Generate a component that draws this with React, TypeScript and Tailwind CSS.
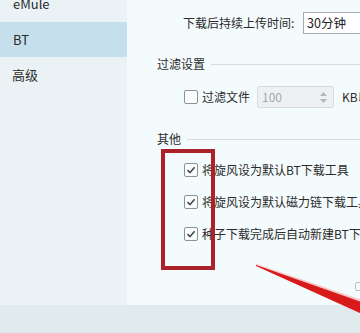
import React from "react";

function CheckBox({ checked }: { checked?: boolean }) {
  return (
    <span className="w-[14px] h-[14px] shrink-0 rounded-[2px] border border-[#8e9396] bg-[#fbfdfd] flex items-center justify-center">
      {checked && (
        <svg width="10" height="10" viewBox="0 0 10 10">
          <polyline points="1.5,5.2 4,7.6 8.6,2.2" fill="none" stroke="#474b4e" strokeWidth="1.6" />
        </svg>
      )}
    </span>
  );
}

function SectionTitle({ label }: { label: string }) {
  return (
    <div className="h-[16px] flex items-center">
      <span className="whitespace-nowrap">{label}</span>
      <div className="flex-1 h-px bg-[#d3dbde] ml-[6px]" />
    </div>
  );
}

export default function App() {
  const options = [
    "将旋风设为默认BT下载工具",
    "将旋风设为默认磁力链下载工具",
    "种子下载完成后自动新建BT下载任务",
  ];

  return (
    <div
      className="relative w-[360px] h-[333px] overflow-hidden flex flex-col text-[12px] text-[#2b2b2b] bg-[#e0ebed]"
      style={{ fontFamily: '"Noto Sans CJK SC", "Noto Sans", sans-serif' }}
    >
      <div className="flex h-[305px]">
        {/* sidebar */}
        <div className="w-[127px] shrink-0 bg-[#eaf2f5] text-[13px]">
          <div className="-mt-[14px] h-[36px] flex items-center pl-[13px]">eMule</div>
          <div className="h-[35px] flex items-center pl-[13px] bg-[#c5e0ec]">BT</div>
          <div className="h-[35px] flex items-center pl-[12px]">高级</div>
        </div>

        {/* main */}
        <div className="relative flex-1 bg-[#f4fbfd] overflow-hidden pl-[30px]">
          <div className="mt-[12px] h-[22px] flex items-center ml-[26px]">
            <span className="w-[120px] shrink-0 whitespace-nowrap">下载后持续上传时间:</span>
            <div className="w-[80px] h-[22px] shrink-0 border border-[#a5adb1] bg-white flex items-center pl-[3px] text-[12.5px] text-[#222]">
              30分钟
            </div>
          </div>

          <div className="mt-[22px]">
            <SectionTitle label="过滤设置" />
          </div>

          <div className="mt-[14px] h-[22px] flex items-center ml-[27px] whitespace-nowrap">
            <CheckBox />
            <span className="ml-[4px]">过滤文件</span>
            <div className="ml-[7px] w-[77px] h-[22px] shrink-0 border border-[#d7dcdf] bg-[#eef1f3] rounded-[2px] flex items-center justify-between pl-[4px] pr-[6px] text-[#a3a8ab]">
              <span>100</span>
              <span className="flex flex-col items-center gap-[3px]">
                <svg width="7" height="4" viewBox="0 0 7 4">
                  <polygon points="0,4 3.5,0 7,4" fill="#b3b8bb" />
                </svg>
                <svg width="7" height="4" viewBox="0 0 7 4">
                  <polygon points="0,0 3.5,4 7,0" fill="#b3b8bb" />
                </svg>
              </span>
            </div>
            <span className="ml-[8px]">KB以内</span>
          </div>

          <div className="mt-[23px]">
            <SectionTitle label="其他" />
          </div>

          <div className="mt-[13px] flex flex-col gap-[12px] ml-[27px]">
            {options.map((o) => (
              <div key={o} className="h-[20px] flex items-center whitespace-nowrap">
                <CheckBox checked />
                <span className="ml-[4px]">{o}</span>
              </div>
            ))}
          </div>

          <div className="absolute left-[228px] top-[282px] w-[12px] h-[9px] border border-[#b9bfc2] rounded-[2px] bg-[#f7fafb]" />

          {/* red highlight box */}
          <div className="absolute left-[34px] top-[149px] w-[54px] h-[121px] border-4 border-[#ab2328]" />
        </div>
      </div>

      <div className="h-[28px] bg-[#e0ebed]" />

      {/* red arrow */}
      <svg className="absolute left-0 top-0 pointer-events-none" width="360" height="333" viewBox="0 0 360 333">
        <polygon points="256,264.5 360,300 360,314 256,266.2" fill="#ff3030" opacity="0.25" transform="translate(0,-0.8)" />
        <polygon points="256,265 360,301.5 360,313 256,266" fill="#d91a1a" />
      </svg>
    </div>
  );
}
